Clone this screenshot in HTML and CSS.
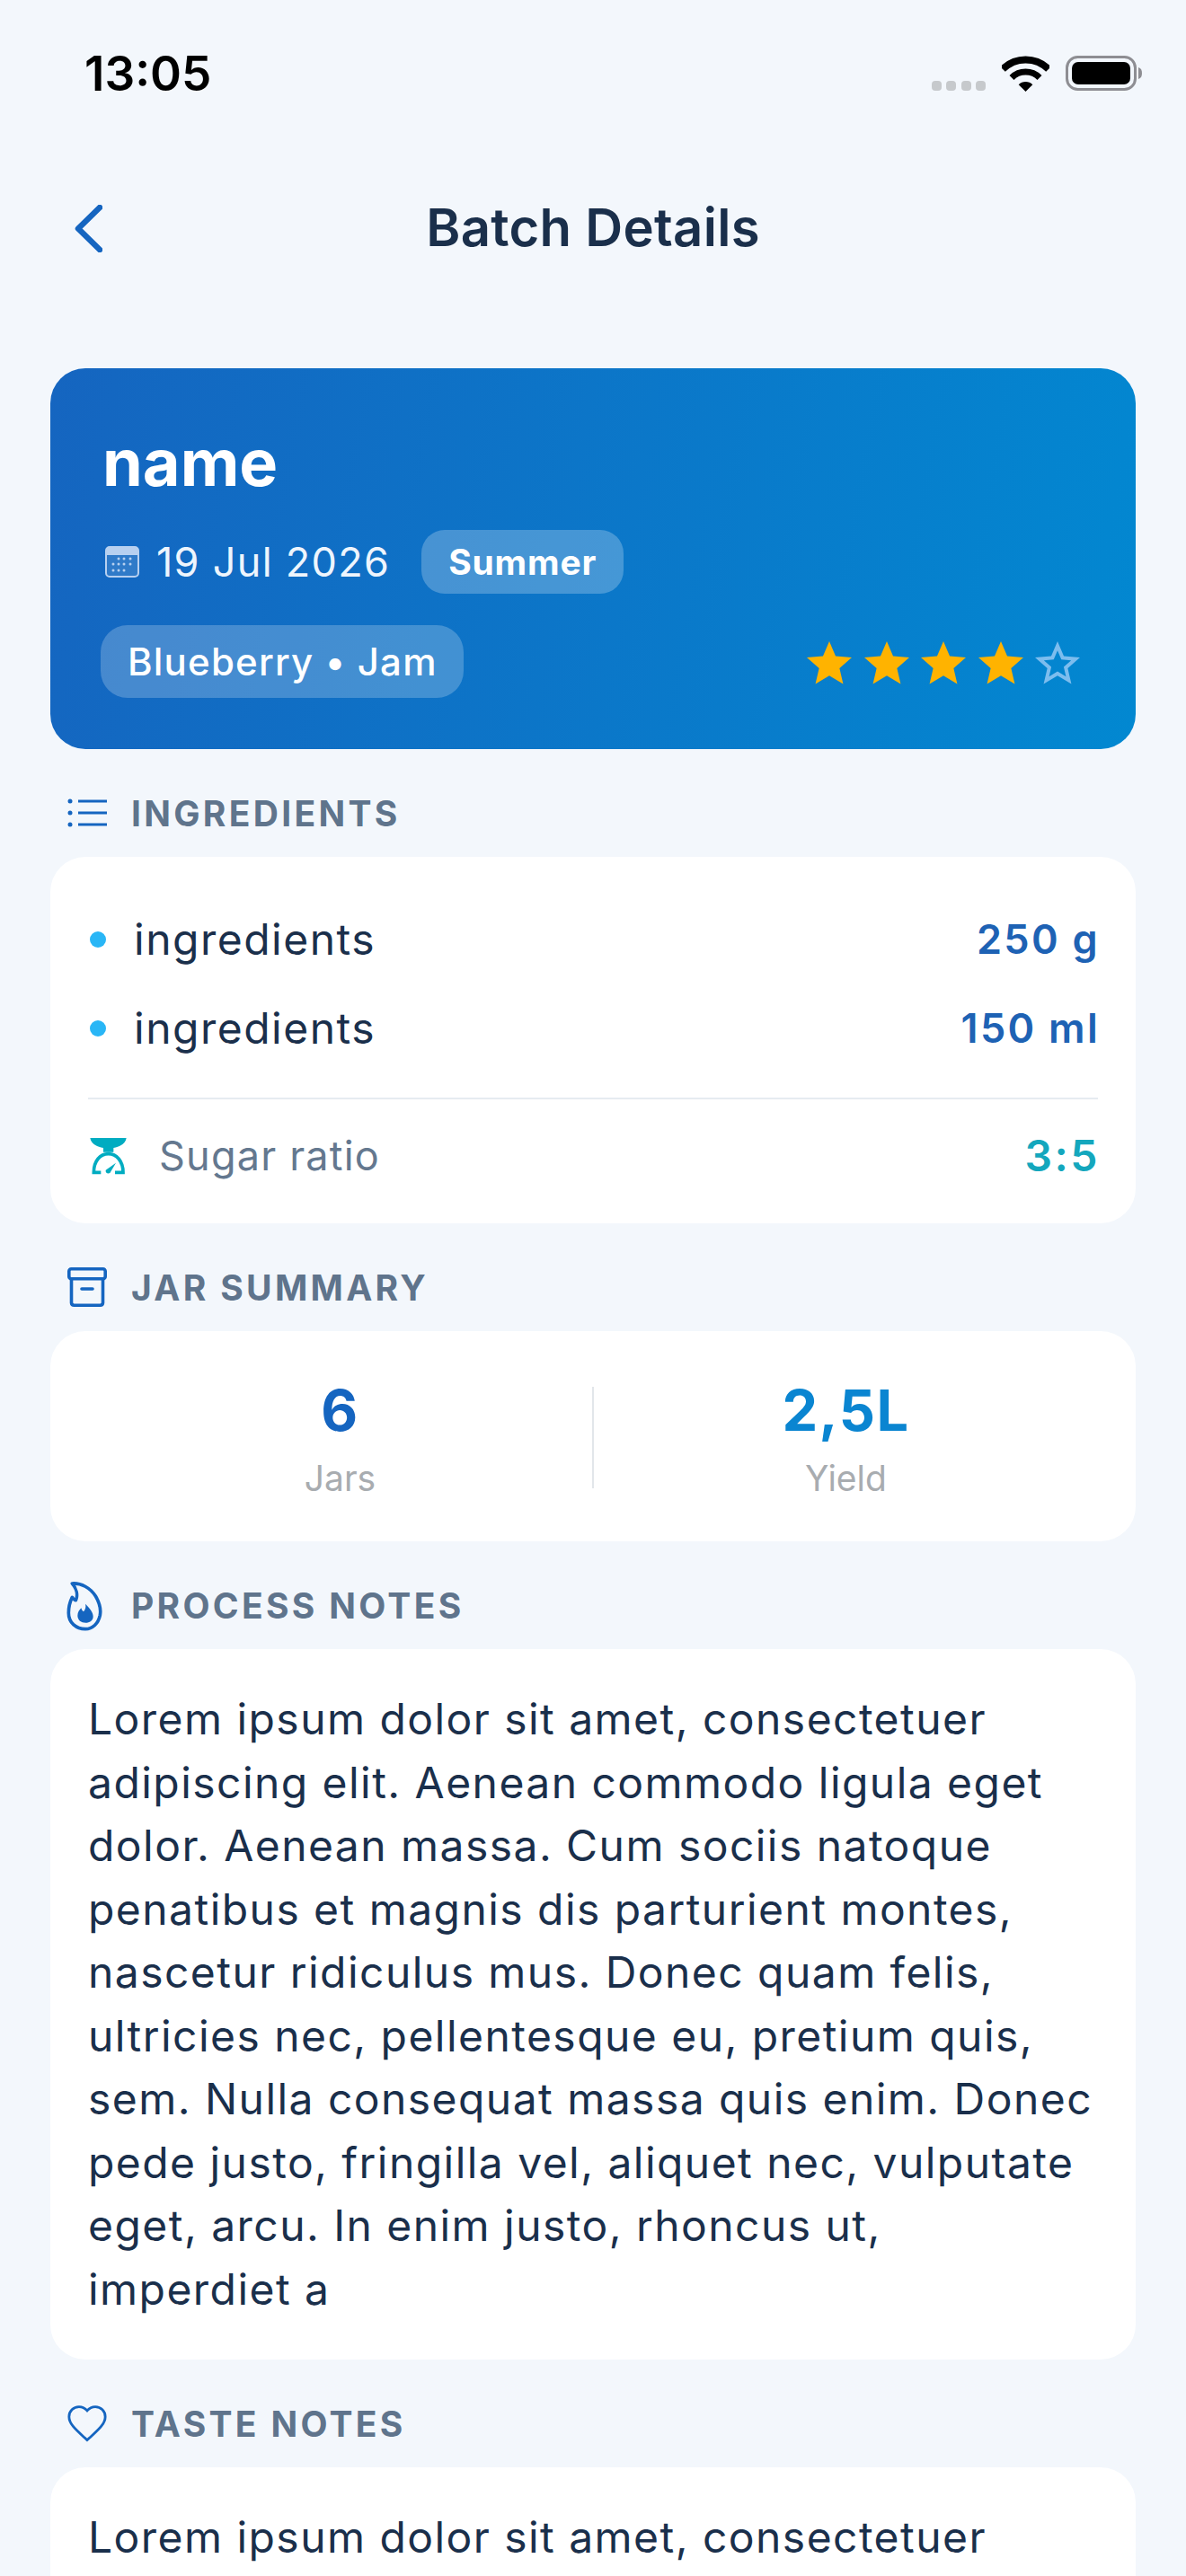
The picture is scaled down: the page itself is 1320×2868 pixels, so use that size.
FILE: index.html
```html
<!DOCTYPE html>
<html lang="en">
<head>
<meta charset="utf-8">
<title>Batch Details</title>
<link rel="stylesheet" href="styles.css">
</head>
<body>
<div class="screen">
  <header class="status">
    <span class="time">13:05</span>
    <div class="status-icons">
      <div class="signal"><i></i><i></i><i></i><i></i></div>
      <svg class="wifi" viewBox="0 0 53 40"><path d="M1 15A36 36 0 0 1 52 15" fill="none" stroke="#000" stroke-width="8"/><path d="M11 24.4A22 22 0 0 1 42 24.4" fill="none" stroke="#000" stroke-width="7"/><path d="M26.5 40L18.7 32.2A11 11 0 0 1 34.3 32.2Z"/></svg>
      <svg class="battery" viewBox="0 0 85 39"><rect x="1.5" y="1.5" width="76" height="36" rx="12" fill="none" stroke="#8e8e93" stroke-width="3"/><rect x="7" y="7" width="65" height="25" rx="7"/><path d="M81 13C84 14 85 16 85 19.500C85 23 84 25 81 26Z" fill="#8e8e93"/></svg>
    </div>
  </header>

  <nav class="nav">
    <svg class="back" viewBox="0 0 32 53"><path d="M29 3L5 26.500L29 50" fill="none" stroke="#1565c0" stroke-width="6.500" stroke-linecap="round" stroke-linejoin="round"/></svg>
    <h1 class="nav-title">Batch Details</h1>
  </nav>

  <main class="content">
    <section class="hero">
      <h2 class="hero-name">name</h2>
      <div class="hero-meta">
        <svg class="cal" viewBox="0 0 38 35"><rect x="1" y="1" width="36" height="33" rx="4" fill="#ffffff" fill-opacity=".12" stroke="#b7d0f0" stroke-width="2"/><path d="M1 10V5a4 4 0 0 1 4-4h28a4 4 0 0 1 4 4v5Z" fill="#b7d0f0"/><g fill="#b7d0f0"><circle cx="15" cy="14" r="1.500"/><circle cx="21" cy="14" r="1.500"/><circle cx="28" cy="14" r="1.500"/><circle cx="9" cy="20" r="1.500"/><circle cx="15" cy="20" r="1.500"/><circle cx="21" cy="20" r="1.500"/><circle cx="28" cy="20" r="1.500"/><circle cx="9" cy="27" r="1.500"/><circle cx="15" cy="27" r="1.500"/><circle cx="21" cy="27" r="1.500"/></g></svg>
        <span class="hero-date">19 Jul 2026</span>
        <span class="season">Summer</span>
      </div>
      <div class="hero-bottom">
        <span class="kind">Blueberry • Jam</span>
        <div class="stars">
          <svg class="star" viewBox="0 0 24 24"><path fill="#ffb300" d="M12 17.270L18.180 21l-1.640-7.030L22 9.240l-7.190-.61L12 2 9.190 8.630 2 9.240l5.460 4.730L5.820 21z"/></svg>
          <svg class="star" viewBox="0 0 24 24"><path fill="#ffb300" d="M12 17.270L18.180 21l-1.640-7.030L22 9.240l-7.190-.61L12 2 9.190 8.630 2 9.240l5.460 4.730L5.820 21z"/></svg>
          <svg class="star" viewBox="0 0 24 24"><path fill="#ffb300" d="M12 17.270L18.180 21l-1.640-7.030L22 9.240l-7.190-.61L12 2 9.190 8.630 2 9.240l5.460 4.730L5.820 21z"/></svg>
          <svg class="star" viewBox="0 0 24 24"><path fill="#ffb300" d="M12 17.270L18.180 21l-1.640-7.030L22 9.240l-7.190-.61L12 2 9.190 8.630 2 9.240l5.460 4.730L5.820 21z"/></svg>
          <svg class="star" viewBox="0 0 24 24"><path fill="#7dbdee" d="M22 9.240l-7.190-.62L12 2 9.190 8.630 2 9.240l5.460 4.730L5.820 21 12 17.270 18.180 21l-1.630-7.030L22 9.240zM12 15.400l-3.760 2.270 1-4.280-3.320-2.880 4.380-.38L12 6.100l1.710 4.040 4.380.38-3.320 2.880 1 4.280L12 15.400z"/></svg>
        </div>
      </div>
    </section>

    <section class="section">
      <div class="sec-head">
        <svg class="sec-icon" viewBox="0 0 44 32"><g fill="#1565c0"><circle cx="3" cy="3" r="2.500"/><circle cx="3" cy="16" r="2.500"/><circle cx="3" cy="29" r="2.500"/></g><path d="M12 3H44M12 16H44M12 29H44" stroke="#1565c0" stroke-width="2.800"/></svg>
        <span class="sec-title">INGREDIENTS</span>
      </div>
      <div class="card ingredients">
        <div class="ing-row"><span class="bullet"></span><span class="ing-name">ingredients</span><span class="ing-qty">250 g</span></div>
        <div class="ing-row"><span class="bullet"></span><span class="ing-name">ingredients</span><span class="ing-qty">150 ml</span></div>
        <div class="ratio">
          <svg class="ratio-icon" viewBox="0 0 180 180"><path d="M22 33H143C140 50 125 62 100 66V80H66V66C40 62 25 50 22 33Z" fill="#00acc1"/><path d="M58 148H34C34 110 55 86 83 86C110 86 132 110 132 148H105" fill="none" stroke="#00acc1" stroke-width="11"/><path d="M108 116L88 150C80 154 72 148 74 140Z" fill="#00acc1"/></svg>
          <span class="ratio-label">Sugar ratio</span>
          <span class="ratio-value">3:5</span>
        </div>
      </div>
    </section>

    <section class="section">
      <div class="sec-head">
        <svg class="sec-icon box" viewBox="0 0 44 44"><g fill="none" stroke="#1565c0" stroke-width="3.600" stroke-linejoin="round"><rect x="1.800" y="1.800" width="40.400" height="11" rx="2.500"/><path d="M4.500 12.600V39.500A3 3 0 0 0 7.500 42.200H36.500A3 3 0 0 0 39.500 39.500V12.600"/><path d="M16 24H28" stroke-linecap="round"/></g></svg>
        <span class="sec-title">JAR SUMMARY</span>
      </div>
      <div class="card jars">
        <div class="jar-col"><span class="jar-value jar-blue">6</span><span class="jar-label">Jars</span></div>
        <span class="jar-divider"></span>
        <div class="jar-col"><span class="jar-value jar-sky">2,5L</span><span class="jar-label">Yield</span></div>
      </div>
    </section>

    <section class="section">
      <div class="sec-head">
        <svg class="sec-icon flame" viewBox="0 0 180 192"><path d="M40 24C70 22 100 38 118 66C130 86 137 108 133 130C127 158 108 176 84 176C54 176 28 156 28 122C28 100 33 84 40 70C44 76 48 80 52 80C60 62 54 40 40 24Z" fill="none" stroke="#1565c0" stroke-width="11" stroke-linejoin="round"/><path d="M84 92C98 106 110 120 110 134C110 148 98 155 85 155C70 155 58 146 58 131C58 120 64 112 70 106C72 112 74 116 78 118C84 110 87 102 84 92Z" fill="#1565c0"/></svg>
        <span class="sec-title">PROCESS NOTES</span>
      </div>
      <div class="card notes">Lorem ipsum dolor sit amet, consectetuer adipiscing elit. Aenean commodo ligula eget dolor. Aenean massa. Cum sociis natoque penatibus et magnis dis parturient montes, nascetur ridiculus mus. Donec quam felis, ultricies nec, pellentesque eu, pretium quis, sem. Nulla consequat massa quis enim. Donec pede justo, fringilla vel, aliquet nec, vulputate eget, arcu. In enim justo, rhoncus ut, imperdiet a</div>
    </section>

    <section class="section">
      <div class="sec-head">
        <svg class="sec-icon heart" viewBox="0 0 24 24"><path d="M12 20.600L10.700 19.400C6 15.100 2.700 12.200 2.700 8.600C2.700 5.700 5 3.500 7.800 3.500C9.400 3.500 11 4.300 12 5.500C13 4.300 14.600 3.500 16.200 3.500C19 3.500 21.300 5.700 21.300 8.600C21.300 12.200 18 15.100 13.300 19.400Z" fill="none" stroke="#1565c0" stroke-width="1.300"/></svg>
        <span class="sec-title">TASTE NOTES</span>
      </div>
      <div class="card notes taste">Lorem ipsum dolor sit amet, consectetuer</div>
    </section>
  </main>
</div>
</body>
</html>
```
FILE: styles.css
```css
* { box-sizing: border-box; margin: 0; padding: 0; }
html, body { width: 1320px; height: 2868px; overflow: hidden; }
body { background: #f3f7fc; font-family: Inter, "Liberation Sans", sans-serif; color: #1a2f4b; }
.screen { height: 2868px; overflow: hidden; }

.status { height: 150px; display: flex; justify-content: space-between; padding: 55px 49px 0 94px; }
.time { font-size: 53px; font-weight: 600; line-height: 54px; color: #000; }
.status-icons { display: flex; align-items: flex-start; padding-top: 7px; }
.signal { display: flex; gap: 5.500px; margin-top: 28px; margin-right: 18px; }
.signal i { width: 11px; height: 11px; border-radius: 4px; background: #c6c9cc; }
.wifi { width: 53px; height: 40px; margin-right: 18px; }
.battery { width: 85px; height: 39px; }

.nav { height: 206px; margin-bottom: 4px; position: relative; display: flex; align-items: center; justify-content: center; }
.back { position: absolute; left: 82px; top: 78px; width: 32px; height: 53px; }
.nav-title { font-size: 58px; font-weight: 600; letter-spacing: .3px; color: #1a2f4b; }

.content { padding: 50px 56px 0; }
.hero { height: 424px; border-radius: 39px; background: linear-gradient(100deg, #1565c0, #0288d1); padding: 63px 60px 0; color: #fff; }
.hero-name { font-size: 72px; font-weight: 700; line-height: 84px; margin-left: -2px; }
.hero-meta { display: flex; align-items: center; margin-top: 33px; }
.cal { width: 38px; height: 35px; margin-left: 1px; }
.hero-date { font-size: 45px; margin-left: 19px; letter-spacing: 1.300px; color: #eef5fd; }
.season { font-size: 39px; font-weight: 700; letter-spacing: .8px; height: 71px; line-height: 71px; padding: 0 30px; margin-left: 35px; border-radius: 26px; background: rgba(255,255,255,.24); }
.hero-bottom { display: flex; justify-content: space-between; align-items: center; margin-top: 35px; margin-left: -4px; }
.kind { font-size: 42px; font-weight: 500; letter-spacing: 1.200px; height: 81px; line-height: 81px; padding: 0 29px 0 30px; border-radius: 30px; background: rgba(255,255,255,.22); }
.stars { display: flex; gap: 3.400px; margin-right: -3px; margin-top: 4px; }
.star { width: 60px; height: 60px; }

.section { margin-top: 41px; }
.sec-head { height: 60px; display: flex; align-items: center; margin-bottom: 19px; padding-left: 19px; }
.sec-icon { width: 44px; height: 32px; flex: none; }
.box { height: 44px; }
.flame { width: 60px; height: 64px; margin: 0 -8px; }
.heart { width: 52px; height: 52px; margin: 0 -4px; }
.sec-title { font-size: 39px; font-weight: 700; color: #5f748c; letter-spacing: 3.300px; margin-left: 27px; }

.card { background: #fff; border-radius: 39px; }
.ingredients { height: 408px; padding: 42px 42px 0; }
.ing-row { display: flex; align-items: center; height: 99px; }
.bullet { width: 18px; height: 18px; border-radius: 50%; background: #29b6f6; margin-left: 2px; flex: none; }
.ing-name { flex: 1; font-size: 48px; margin-left: 31px; letter-spacing: 1.500px; color: #1a2f4b; }
.ing-qty { font-size: 45px; font-weight: 600; color: #1e62b4; letter-spacing: 2.300px; margin-right: -2px; }
.ratio { display: flex; align-items: center; height: 128px; margin-top: 28px; border-top: 2px solid #e6ebf1; padding-bottom: 2px; }
.ratio-icon { width: 60px; height: 60px; margin-left: -5px; flex: none; }
.ratio-label { flex: 1; font-size: 45px; color: #64788f; letter-spacing: 1.200px; margin-left: 24px; }
.ratio-value { font-size: 48px; font-weight: 600; color: #14a7bd; letter-spacing: 2.500px; margin-right: -2px; }

.jars { height: 234px; display: flex; align-items: center; padding: 3px 42px 0; }
.jar-col { flex: 1; display: flex; flex-direction: column; align-items: center; }
.jar-value { font-size: 63px; font-weight: 700; line-height: 76px; letter-spacing: 1.500px; }
.jar-blue { color: #1565c0; }
.jar-sky { color: #0a85d1; }
.jar-label { font-size: 39px; line-height: 46px; margin-top: 15px; color: #a8acb0; }
.jar-divider { width: 2px; height: 113px; background: #e2e6ea; flex: none; }

.notes { padding: 43px 45px 43px 42px; font-size: 48px; line-height: 70.500px; letter-spacing: 1.450px; color: #1a2f4b; }
.taste { min-height: 300px; }
```
